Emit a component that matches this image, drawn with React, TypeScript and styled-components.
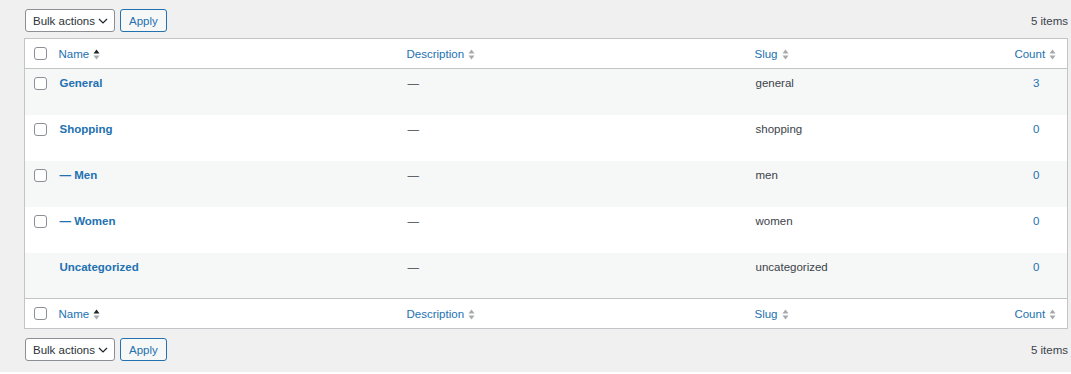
import React from "react";
import styled, { createGlobalStyle } from "styled-components";

const palette = {
  bg: "#f0f0f1",
  border: "#c3c4c7",
  input: "#8c8f94",
  blue: "#2271b1",
  text: "#3c434a",
  dark: "#1d2327",
  stripe: "#f6f7f7",
  arrow: "#a7aaad",
};

interface Term {
  name: string;
  depth: number;
  slug: string;
  count: number;
  locked?: boolean;
}

const terms: Term[] = [
  { name: "General", depth: 0, slug: "general", count: 3 },
  { name: "Shopping", depth: 0, slug: "shopping", count: 0 },
  { name: "Men", depth: 1, slug: "men", count: 0 },
  { name: "Women", depth: 1, slug: "women", count: 0 },
  { name: "Uncategorized", depth: 0, slug: "uncategorized", count: 0, locked: true },
];

const GlobalStyle = createGlobalStyle`
  html, body {
    margin: 0;
    padding: 0;
    background: #fff;
  }
  body {
    font-family: "Liberation Sans", Arial, sans-serif;
    font-size: 11.5px;
    color: ${palette.text};
  }
`;

const SortIcon = ({ active }: { active?: boolean }) => (
  <svg width="7" height="11" viewBox="0 0 7 11">
    <path d="M3.5 0.5 L6.5 4.5 L0.5 4.5 Z" fill={active ? palette.dark : palette.arrow} />
    <path d="M0.5 6.5 L6.5 6.5 L3.5 10.5 Z" fill={palette.arrow} />
  </svg>
);

const Chevron = () => (
  <svg width="10" height="6" viewBox="0 0 10 6">
    <path d="M1 1 L5 5 L9 1" fill="none" stroke={palette.dark} strokeWidth="1.2" />
  </svg>
);

const TableNav = ({ bottom }: { bottom?: boolean }) => (
  <NavBar $bottom={bottom}>
    <div className="actions">
      <BulkSelect>
        <span>Bulk actions</span>
        <Chevron />
      </BulkSelect>
      <ApplyButton>Apply</ApplyButton>
    </div>
    <p className="count">5 items</p>
  </NavBar>
);

const HeadRow = () => (
  <tr>
    <CheckCell as="td">
      <Checkbox />
    </CheckCell>
    <HeadCell>
      <SortLink>
        Name <SortIcon active />
      </SortLink>
    </HeadCell>
    <HeadCell>
      <SortLink>
        Description <SortIcon />
      </SortLink>
    </HeadCell>
    <HeadCell>
      <SortLink>
        Slug <SortIcon />
      </SortLink>
    </HeadCell>
    <HeadCell $center>
      <SortLink>
        Count <SortIcon />
      </SortLink>
    </HeadCell>
  </tr>
);

const App = () => {
  return (
    <>
      <GlobalStyle />
      <Page>
        <TableNav />
        <TermsTable>
          <colgroup>
            <col style={{ width: 25 }} />
            <col style={{ width: 348 }} />
            <col style={{ width: 348 }} />
            <col style={{ width: 258 }} />
            <col />
          </colgroup>
          <thead>
            <HeadRow />
          </thead>
          <tbody>
            {terms.map((t, i) => (
              <BodyRow key={t.slug} $striped={i % 2 === 0}>
                <CheckCell>{!t.locked && <Checkbox />}</CheckCell>
                <Cell>
                  <TermName>
                    {t.depth > 0 ? "— " : ""}
                    {t.name}
                  </TermName>
                </Cell>
                <Cell>
                  <Dash>—</Dash>
                </Cell>
                <Cell>{t.slug}</Cell>
                <Cell $center>
                  <CountLink>{t.count}</CountLink>
                </Cell>
              </BodyRow>
            ))}
          </tbody>
          <tfoot>
            <HeadRow />
          </tfoot>
        </TermsTable>
        <TableNav bottom />
      </Page>
    </>
  );
};

const Page = styled.div`
  height: 372px;
  box-sizing: border-box;
  background: ${palette.bg};
  padding: 9px 3px 0 24px;
`;

const NavBar = styled.div<{ $bottom?: boolean }>`
  display: flex;
  align-items: center;
  justify-content: space-between;
  height: 23px;
  margin: ${({ $bottom }) => ($bottom ? "9px 0 0" : "0 0 6px")};
  .actions {
    display: flex;
    align-items: center;
    gap: 5px;
    padding-left: 1px;
  }
  .count {
    margin: 0;
    color: ${palette.text};
  }
`;

const BulkSelect = styled.div`
  display: flex;
  align-items: center;
  justify-content: space-between;
  flex-shrink: 0;
  white-space: nowrap;
  box-sizing: border-box;
  width: 90px;
  height: 23px;
  padding: 0 6px 0 7px;
  background: #fff;
  border: 1px solid ${palette.input};
  border-radius: 3px;
  color: #2c3338;
  svg {
    flex-shrink: 0;
  }
`;

const ApplyButton = styled.button`
  box-sizing: border-box;
  height: 23px;
  padding: 0 8px;
  font: inherit;
  color: ${palette.blue};
  background: ${palette.stripe};
  border: 1px solid ${palette.blue};
  border-radius: 3px;
`;

const TermsTable = styled.table`
  width: 1044px;
  table-layout: fixed;
  border-collapse: collapse;
  background: #fff;
  border: 1px solid ${palette.border};
  thead tr {
    border-bottom: 1px solid ${palette.border};
  }
  tfoot tr {
    border-top: 1px solid ${palette.border};
  }
  thead tr,
  tfoot tr {
    height: 30px;
  }
`;

const CheckCell = styled.td`
  padding: 0 0 0 9px;
  vertical-align: middle;
  tbody & {
    vertical-align: top;
    padding-top: 8px;
  }
`;

const Checkbox = styled.span`
  display: block;
  box-sizing: border-box;
  width: 13px;
  height: 13px;
  background: #fff;
  border: 1px solid ${palette.input};
  border-radius: 3px;
`;

const HeadCell = styled.th<{ $center?: boolean }>`
  padding: 0 8px 0 ${({ $center }) => ($center ? "8px" : "9px")};
  font-weight: 400;
  text-align: ${({ $center }) => ($center ? "center" : "left")};
  vertical-align: middle;
`;

const SortLink = styled.span`
  display: inline-flex;
  align-items: center;
  gap: 4px;
  color: ${palette.blue};
  svg {
    margin-top: 1px;
  }
`;

const BodyRow = styled.tr<{ $striped?: boolean }>`
  height: 46px;
  background: ${({ $striped }) => ($striped ? palette.stripe : "#fff")};
`;

const Cell = styled.td<{ $center?: boolean }>`
  padding: 6px 8px 0 10px;
  vertical-align: top;
  line-height: 16px;
  color: ${palette.text};
  text-align: ${({ $center }) => ($center ? "center" : "left")};
`;

const TermName = styled.span`
  font-weight: 700;
  color: ${palette.blue};
`;

const Dash = styled.span`
  color: ${palette.text};
`;

const CountLink = styled.span`
  color: ${palette.blue};
`;

export default App;
